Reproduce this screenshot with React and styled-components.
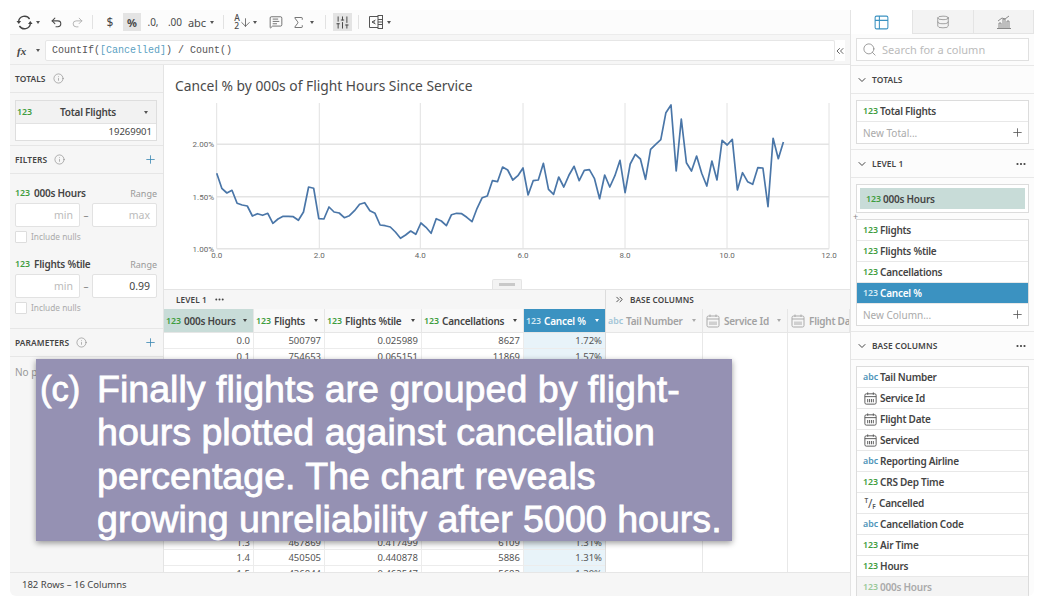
import styled, { createGlobalStyle } from "styled-components";
import { Undo2, Redo2, MessageSquareText, Sigma, SlidersVertical, Info, Plus, ChevronDown, ChevronsLeft, ChevronsRight, Search, Table2, Database, Ellipsis, ArrowDown } from "lucide-react";

const GlobalStyle = createGlobalStyle`
    html, body {
        margin: 0;
        background: #fff;
        font-family: "Noto Sans", "Open Sans", sans-serif;
        color: #444;
    }
    * { box-sizing: border-box; }
    svg { flex: none; }
`

const Page = styled.div`
    width: 1044px;
    height: 607px;
    padding: 10px;
    position: relative;
    overflow: hidden;
`
const Frame = styled.div`
    display: flex;
    width: 1024px;
    height: 586px;
    overflow: hidden;
    border-radius: 0 0 6px 6px;
`
const Main = styled.div`
    width: 840px;
    display: flex;
    flex-direction: column;
`
const Toolbar = styled.div`
    height: 24px;
    display: flex;
    align-items: center;
    padding-left: 5px;
    background: #fcfcfc;
    color: #555;
`
const Tool = styled.div`
    width: ${(p) => p.$w || 18}px;
    margin-left: ${(p) => p.$ml || 0}px;
    height: 18px;
    flex: none;
    display: flex;
    align-items: center;
    justify-content: center;
    font-size: ${(p) => p.$size || 11}px;
    font-weight: ${(p) => p.$bold ? 700 : 400};
    white-space: nowrap;
    color: ${(p) => p.$muted ? "#aaa" : "#4a4a4a"};
    background: ${(p) => p.$active ? "#e4e4e4" : "transparent"};
`
const Divider = styled.div`
    width: 1px;
    height: 14px;
    flex: none;
    background: #e2e2e2;
    margin: 0 ${(p) => p.$m || 7}px;
`
const Caret = styled.span`
    width: 0;
    height: 0;
    flex: none;
    border-left: 2.5px solid transparent;
    border-right: 2.5px solid transparent;
    border-top: 3px solid ${(p) => p.$color || "#555"};
`
const SortStack = styled.span`
    display: flex;
    flex-direction: column;
    font-size: 8.5px;
    line-height: 8px;
    font-weight: 500;
`
const FormulaBar = styled.div`
    height: 31px;
    display: flex;
    align-items: center;
    background: #f6f6f6;
    border-top: 1px solid #ececec;
    border-bottom: 1px solid #e8e8e8;
    padding: 2px 0 0 7px;
`
const Fx = styled.span`
    font-family: "Liberation Serif", serif;
    font-style: italic;
    font-weight: 700;
    font-size: 11px;
    width: 19px;
`
const FormulaInput = styled.div`
    margin-left: 5px;
    width: 790px;
    height: 21px;
    background: #fff;
    border: 1px solid #e6e6e6;
    border-radius: 2px;
    padding-left: 6px;
    font-family: "Liberation Mono", monospace;
    font-size: 10px;
    line-height: 19px;
    color: #555;
`
const FieldRef = styled.span`
    color: #5b9fc2;
`
const Collapse = styled.div`
    width: 10px;
    height: 21px;
    display: flex;
    align-items: center;
    justify-content: center;
    color: #666;
    background: #fff;
`
const Body = styled.div`
    flex: 1;
    min-height: 0;
    display: flex;
`
const LeftPanel = styled.div`
    width: 154px;
    flex: none;
    background: #f6f6f6;
    border-right: 1px solid #e4e4e4;
    overflow: hidden;
`
const SectionHead = styled.div`
    height: 28px;
    display: flex;
    align-items: center;
    gap: 7px;
    padding: 0 6px 0 5px;
    border-bottom: 1px solid #e6e6e6;
    font-size: 8.4px;
    font-weight: 600;
    letter-spacing: 0.1px;
    color: #444;
`
const PushRight = styled.span`
    margin-left: auto;
    display: flex;
    align-items: center;
    color: ${(p) => p.$color || "#444"};
`
const TotalsBody = styled.div`
    padding: 7px 6px 4px 5px;
    border-bottom: 1px solid #e6e6e6;
`
const TotalCard = styled.div`
    border: 1px solid #dedede;
    background: #fff;
`
const TotalTitle = styled.div`
    height: 23px;
    display: flex;
    align-items: center;
    background: #f2f2f2;
    border-bottom: 1px solid #e2e2e2;
    padding: 0 8px 0 1px;
    font-size: 10px;
    font-weight: 600;
    letter-spacing: -0.25px;
`
const TotalName = styled.span`
    flex: 1;
    text-align: center;
`
const TotalValue = styled.div`
    height: 16px;
    text-align: right;
    padding-right: 4px;
    font-size: 9.5px;
    line-height: 15px;
`
const Type = styled.span`
    flex: none;
    font-size: 8.8px;
    font-weight: 600;
    letter-spacing: 0;
    color: ${(p) => p.$light ? "#d5e9f4" : p.$kind === "abc" ? "#4c93b8" : "#3f9d3f"};
    opacity: ${(p) => p.$faded ? 0.5 : 1};
`
const BoolMark = styled.span`
    flex: none;
    width: 14px;
    height: 13px;
    display: flex;
    justify-content: center;
    font-size: 6.5px;
    font-weight: 600;
    color: #555;
`
const BoolPart = styled.span`
    align-self: ${(p) => p.$low ? "flex-end" : "flex-start"};
    line-height: 7px;
    font-size: ${(p) => p.$slash ? 12 : 6.5}px;
    font-weight: ${(p) => p.$slash ? 400 : 600};
    ${(p) => p.$slash && "align-self: center; line-height: 13px;"}
`
const FilterBody = styled.div`
    padding: 11px 6px 14px 5px;
    display: flex;
    flex-direction: column;
    gap: 13px;
    border-bottom: 1px solid #e6e6e6;
`
const Filter = styled.div`
    display: flex;
    flex-direction: column;
`
const FilterLabel = styled.div`
    height: 16px;
    margin-bottom: 2px;
    display: flex;
    align-items: center;
    gap: 4px;
    font-size: 10px;
    font-weight: 600;
    letter-spacing: -0.25px;
`
const RangeText = styled.span`
    margin-left: auto;
    font-size: 9px;
    font-weight: 400;
    letter-spacing: 0;
    color: #999;
`
const RangeRow = styled.div`
    display: flex;
    align-items: center;
    justify-content: space-between;
    color: #888;
    font-size: 10px;
`
const RangeInput = styled.div`
    width: 65px;
    height: 24px;
    background: #fff;
    border: 1px solid #e2e2e2;
    border-radius: 2px;
    padding-right: 6px;
    text-align: right;
    font-size: 10.5px;
    line-height: 22px;
    color: ${(p) => p.$filled ? "#444" : "#bbb"};
`
const NullsRow = styled.div`
    margin-top: 3px;
    height: 13px;
    display: flex;
    align-items: center;
    gap: 4px;
    font-size: 8.3px;
    color: #aaa;
`
const CheckBox = styled.span`
    width: 12px;
    height: 12px;
    border: 1px solid #ddd;
    background: #fff;
    border-radius: 1px;
`
const EmptyNote = styled.div`
    padding: 8px 5px;
    font-size: 10px;
    color: #999;
`
const Center = styled.div`
    flex: 1;
    min-width: 0;
    display: flex;
    flex-direction: column;
`
const ChartArea = styled.div`
    height: 225px;
    flex: none;
    display: flex;
    flex-direction: column;
    background: #fff;
    border-bottom: 1px solid #e4e4e4;
`
const ChartTitle = styled.div`
    height: 35px;
    padding: 11px 0 0 11px;
    font-size: 13.8px;
    line-height: 20px;
    color: #4a4a4a;
`
const ChartSvg = styled.svg`
    display: block;
    flex: none;
`
const Handle = styled.div`
    width: 30px;
    height: 10px;
    margin: auto auto 0;
    background: #f3f3f3;
    border: 1px solid #e4e4e4;
    border-bottom: 0;
    border-radius: 2px 2px 0 0;
    display: flex;
    align-items: center;
    justify-content: center;
    &::after {
        content: "";
        width: 16px;
        height: 3px;
        background: #c9c9c9;
    }
`
const TableArea = styled.div`
    flex: 1;
    min-height: 0;
    display: flex;
    overflow: hidden;
    background: #fff;
`
const TablePane = styled.div`
    width: ${(p) => p.$w}px;
    flex: none;
    overflow: hidden;
    border-right: ${(p) => p.$border ? "1px solid #dcdcdc" : "0"};
`
const PaneTitle = styled.div`
    height: 19px;
    display: flex;
    align-items: center;
    gap: ${(p) => p.$gap || 7}px;
    padding-left: ${(p) => p.$pad || 12}px;
    background: #f6f6f6;
    font-size: 8.2px;
    font-weight: 600;
    letter-spacing: 0.1px;
`
const Grid = styled.div`
    display: grid;
    grid-template-columns: ${(p) => p.$cols};
`
const HeadCell = styled.div`
    height: 24px;
    display: flex;
    align-items: center;
    gap: 3px;
    padding: 0 6px 0 2px;
    font-size: 10px;
    font-weight: 600;
    letter-spacing: -0.25px;
    white-space: nowrap;
    overflow: hidden;
    color: ${(p) => p.$tone === "blue" ? "#fff" : p.$tone === "muted" ? "#a2a2a2" : "#444"};
    background: ${(p) => p.$tone === "blue" ? "#3b92c1" : p.$tone === "teal" ? "#c8dcd8" : p.$tone === "muted" ? "#f6f6f6" : "#f9f9f9"};
    border-right: 1px solid #e6e6e6;
    border-bottom: 1px solid #e6e6e6;
`
const HeadName = styled.span`
    flex: 1 0 auto;
`
const Cell = styled.div`
    height: 15.5px;
    padding-right: 3px;
    text-align: right;
    font-size: 9.5px;
    line-height: 15px;
    color: #555;
    background: ${(p) => p.$sel ? "#e8f3f9" : "#fff"};
    border-right: 1px solid #ececec;
    border-bottom: 1px solid #ececec;
`
const EmptyColumns = styled.div`
    height: 260px;
    display: grid;
    grid-template-columns: 97px 85px 1fr;
`
const EmptyColumn = styled.div`
    border-right: 1px solid #e8e8e8;
`
const Footer = styled.div`
    height: 24px;
    flex: none;
    display: flex;
    align-items: center;
    padding-left: 12px;
    background: #f6f6f6;
    border-top: 1px solid #e6e6e6;
    font-size: 9.5px;
`
const RightPanel = styled.div`
    width: 184px;
    flex: none;
    background: #fcfcfc;
    border-left: 1px solid #e4e4e4;
    overflow: hidden;
`
const Tabs = styled.div`
    height: 24px;
    display: grid;
    grid-template-columns: 62px 61px 1fr;
`
const Tab = styled.div`
    display: flex;
    align-items: center;
    justify-content: center;
    color: ${(p) => p.$active ? "#3b92c1" : "#888"};
    background: ${(p) => p.$active ? "#fff" : "#f3f3f3"};
    border-right: 1px solid #e4e4e4;
    border-bottom: ${(p) => p.$active ? "0" : "1px solid #e4e4e4"};
`
const SearchBox = styled.div`
    margin: 4px 5px;
    height: 23px;
    display: flex;
    align-items: center;
    gap: 5px;
    padding-left: 5px;
    background: #fff;
    border: 1px solid #e0e0e0;
    font-size: 11px;
    color: #bbb;
`
const PanelHead = styled.div`
    height: 29px;
    display: flex;
    align-items: center;
    gap: 4px;
    padding: 0 7px 0 5px;
    border-top: 1px solid #e8e8e8;
    border-bottom: 1px solid #e8e8e8;
    font-size: 8.4px;
    font-weight: 600;
    letter-spacing: 0.1px;
`
const FieldBox = styled.div`
    margin: ${(p) => p.$top ?? 6}px 5px ${(p) => p.$bottom ?? 5}px 5px;
    background: #fff;
    border: 1px solid #dcdcdc;
    padding: ${(p) => p.$inset ? "3px" : "0"};
`
const Field = styled.div`
    height: 21px;
    display: flex;
    align-items: center;
    gap: 2px;
    padding: 0 5px 0 6px;
    font-size: 10px;
    font-weight: 600;
    letter-spacing: -0.25px;
    border-bottom: ${(p) => p.$inset ? "0" : "1px solid #e8e8e8"};
    color: ${(p) => p.$selected ? "#fff" : p.$faded ? "#aaa" : "#444"};
    background: ${(p) => p.$selected ? "#3b92c1" : p.$inset ? "#c8dcd8" : p.$faded ? "#f4f4f4" : "#fff"};
`
const NewField = styled.div`
    height: 21px;
    display: flex;
    align-items: center;
    justify-content: space-between;
    padding: 0 4px 0 6px;
    font-size: 10px;
    color: #aaa;
`
const DropMark = styled.div`
    height: 7px;
    margin-bottom: -1px;
    padding-left: 2px;
    font-size: 9px;
    line-height: 7px;
    color: #888;
`
const Callout = styled.div`
    position: absolute;
    left: 36px;
    top: 359px;
    width: 696px;
    height: 182px;
    padding: 9px 0 0 4px;
    display: grid;
    grid-template-columns: 57px 1fr;
    background: #9591b3;
    box-shadow: 0 2px 6px rgba(0, 0, 0, 0.4);
    font-family: "Liberation Sans", Arial, sans-serif;
    font-size: 37.6px;
    line-height: 43.3px;
    color: #fff;
    -webkit-text-stroke: 0.8px #fff;
`
const CalloutMark = styled.div`
    font-size: 34.5px;
`
const CalloutLine = styled.div`
    white-space: nowrap;
`

const points = [
    [0, 250], [1, 295], [2, 309], [3, 301], [4, 340], [5, 345], [6, 348], [7, 378], [8, 371], [9, 376],
    [10, 370], [11, 400], [12, 387], [13, 379], [14, 379], [15, 380], [16, 391], [17, 366], [18, 291], [19, 295],
    [20, 386], [21, 387], [22, 351], [23, 366], [24, 369], [25, 383], [26, 377], [27, 362], [28, 343], [29, 338],
    [30, 362], [31, 370], [32, 405], [33, 407], [34, 411], [35, 426], [36, 445], [37, 435], [38, 423], [39, 433],
    [40, 399], [41, 412], [42, 430], [43, 386], [44, 393], [45, 407], [46, 374], [47, 370], [48, 371], [49, 382],
    [50, 395], [51, 355], [52, 323], [53, 318], [54, 272], [55, 275], [56, 231], [57, 240], [58, 270], [59, 257],
    [60, 234], [61, 315], [62, 272], [63, 270], [64, 220], [65, 298], [66, 313], [67, 261], [68, 291], [69, 256],
    [70, 229], [71, 272], [72, 241], [73, 239], [74, 266], [75, 326], [76, 255], [77, 291], [78, 257], [79, 211],
    [80, 308], [81, 222], [82, 193], [83, 207], [84, 268], [85, 178], [86, 163], [87, 149], [88, 68], [89, 45],
    [90, 243], [91, 87], [92, 218], [93, 243], [94, 198], [95, 250], [96, 288], [97, 213], [98, 270], [99, 151],
    [100, 165], [101, 148], [102, 300], [103, 248], [104, 275], [105, 283], [106, 233], [107, 234], [108, 350], [109, 145],
    [110, 206], [111, 156],
]
const linePath = points.map(([i, z]) => `${(52.7 + i * 5.105).toFixed(1)},${(z / 3 - 10).toFixed(1)}`).join(" ")

const xTicks = [["0.0", 52.7], ["2.0", 155.3], ["4.0", 256.3], ["6.0", 359], ["8.0", 461], ["10.0", 563], ["12.0", 665]]
const yTicks = [["2.00%", 44.3], ["1.50%", 96.7], ["1.00%", 148.7]]

// the rows from 0.2 to 1.2 sit behind the callout, so they stay blank
const blankRow = () => ["", "", "", "", ""]
const tableRows = [
    ["0.0", "500797", "0.025989", "8627", "1.72%"],
    ["0.1", "754653", "0.065151", "11869", "1.57%"],
    ...Array.from({ length: 11 }, blankRow),
    ["1.3", "467869", "0.417499", "6109", "1.31%"],
    ["1.4", "450505", "0.440878", "5886", "1.31%"],
    ["1.5", "436844", "0.462547", "5682", "1.30%"],
]

function CalendarIcon({ size = 16, color = "#555" }) {
    return (
        <svg width={size} height={size} viewBox="0 0 16 16" fill="none" stroke={color} strokeWidth="1">
            <rect x="2" y="3" width="12" height="11" rx="1.5" />
            <path d="M2 6h12M5 1.5v2.5M11 1.5v2.5M5 8.5v3.5M7 8.5v3.5M9 8.5v3.5M11 8.5v3.5" />
        </svg>
    )
}

function RefreshIcon() {
    return (
        <svg width="17" height="17" viewBox="0 0 17 17" fill="none" stroke="#444" strokeWidth="1.4">
            <path d="M2.6 7.5a6 6 0 0 1 11-2.5" />
            <path d="M14.4 9.5a6 6 0 0 1-11 2.5" />
            <path d="M0.5 7h4.6l-2.3 3z M12 10h4.6l-2.3-3z" fill="#444" stroke="none" />
        </svg>
    )
}

function PanelIcon() {
    return (
        <svg width="16" height="14" viewBox="0 0 16 14" fill="none" stroke="#555" strokeWidth="1">
            <path d="M10 1.5H1.5v11H10" />
            <rect x="10" y="0.5" width="4.5" height="13" />
            <path d="M7.5 5L4 7l3.5 2M4 7h3M10 4.5h4.5M10 7h4.5M10 9.5h4.5" />
        </svg>
    )
}

function ChartTabIcon() {
    return (
        <svg width="16" height="16" viewBox="0 0 16 16" fill="none" stroke="#888" strokeWidth="1">
            <path d="M1 14.5h14M3 14V9h2v5M7 14V5h2v9M11 14V7h2v7M2 7l4-3 3 1 4-3" />
        </svg>
    )
}

function FieldRow({ kind = "123", name, selected, faded, inset }) {
    return (
        <Field $selected={selected} $faded={faded} $inset={inset}>
            {kind === "date" && <CalendarIcon size={15} />}
            {kind === "bool" && (
                <BoolMark>
                    <BoolPart>T</BoolPart>
                    <BoolPart $slash>/</BoolPart>
                    <BoolPart $low>F</BoolPart>
                </BoolMark>
            )}
            {kind !== "date" && kind !== "bool" && (
                <Type $kind={kind} $faded={faded} $light={selected}>{kind}</Type>
            )}
            {name}
        </Field>
    )
}

function ColumnHead({ kind = "123", name, tone }) {
    return (
        <HeadCell $tone={tone}>
            {kind === "date" ? <CalendarIcon color="#aaa" /> : (
                <Type $kind={kind} $faded={tone === "muted"} $light={tone === "blue"}>{kind}</Type>
            )}
            <HeadName>{name}</HeadName>
            <Caret $color={tone === "blue" ? "#fff" : tone === "muted" ? "#aaa" : "#444"} />
        </HeadCell>
    )
}

function RangeFilter({ name, max, filled }) {
    return (
        <Filter>
            <FilterLabel>
                <Type>123</Type>
                {name}
                <RangeText>Range</RangeText>
            </FilterLabel>
            <RangeRow>
                <RangeInput>min</RangeInput>
                –
                <RangeInput $filled={filled}>{max}</RangeInput>
            </RangeRow>
            <NullsRow>
                <CheckBox />
                Include nulls
            </NullsRow>
        </Filter>
    )
}

export default function App() {
    return (
        <Page>
            <GlobalStyle />
            <Frame>
                <Main>
                    <Toolbar>
                        <Tool><RefreshIcon /></Tool>
                        <Tool $w={10}><Caret /></Tool>
                        <Tool $w={26}><Undo2 size={13} strokeWidth={1.9} /></Tool>
                        <Tool $w={16} $muted><Redo2 size={13} strokeWidth={1.6} /></Tool>
                        <Divider />
                        <Tool $w={20} $size={12}>$</Tool>
                        <Tool $ml={3} $active $bold>%</Tool>
                        <Tool $w={24} $size={10}>.0,</Tool>
                        <Tool $w={20} $size={10}>.00</Tool>
                        <Tool $w={24}>abc</Tool>
                        <Tool $w={6}><Caret /></Tool>
                        <Divider $m={8} />
                        <Tool $w={10}>
                            <SortStack><span>A</span><span>2</span></SortStack>
                        </Tool>
                        <Tool $w={6}><ArrowDown size={13} strokeWidth={1.4} /></Tool>
                        <Tool $w={14}><Caret /></Tool>
                        <Tool $w={28}><MessageSquareText size={14} strokeWidth={1.3} /></Tool>
                        <Tool $w={16}><Sigma size={15} strokeWidth={1.2} /></Tool>
                        <Tool $w={12}><Caret /></Tool>
                        <Divider $m={7} />
                        <Tool $w={19} $active><SlidersVertical size={15} strokeWidth={1.6} /></Tool>
                        <Divider $m={6} />
                        <Tool $w={22}><PanelIcon /></Tool>
                        <Tool $w={4}><Caret /></Tool>
                    </Toolbar>
                    <FormulaBar>
                        <Fx>fx</Fx>
                        <Caret />
                        <FormulaInput>
                            CountIf(<FieldRef>[Cancelled]</FieldRef>) / Count()
                        </FormulaInput>
                        <Collapse><ChevronsLeft size={12} /></Collapse>
                    </FormulaBar>
                    <Body>
                        <LeftPanel>
                            <SectionHead>TOTALS <Info size={11} strokeWidth={1.2} color="#777" /></SectionHead>
                            <TotalsBody>
                                <TotalCard>
                                    <TotalTitle>
                                        <Type>123</Type>
                                        <TotalName>Total Flights</TotalName>
                                        <Caret />
                                    </TotalTitle>
                                    <TotalValue>19269901</TotalValue>
                                </TotalCard>
                            </TotalsBody>
                            <SectionHead>
                                FILTERS <Info size={11} strokeWidth={1.2} color="#777" />
                                <PushRight $color="#3b87b3"><Plus size={13} strokeWidth={1.5} /></PushRight>
                            </SectionHead>
                            <FilterBody>
                                <RangeFilter name="000s Hours" max="max" />
                                <RangeFilter name="Flights %tile" max="0.99" filled />
                            </FilterBody>
                            <SectionHead>
                                PARAMETERS <Info size={11} strokeWidth={1.2} color="#777" />
                                <PushRight $color="#3b87b3"><Plus size={13} strokeWidth={1.5} /></PushRight>
                            </SectionHead>
                            <EmptyNote>No p</EmptyNote>
                        </LeftPanel>
                        <Center>
                            <ChartArea>
                                <ChartTitle>Cancel % by 000s of Flight Hours Since Service</ChartTitle>
                                <ChartSvg width="686" height="165" viewBox="0 0 686 165">
                                    {yTicks.map(([label, y]) => (
                                        <g key={label}>
                                            <line x1="52.7" x2="665" y1={y} y2={y} stroke="#e4e4e4" strokeWidth="1.4" />
                                            <text x="50" y={y + 3} textAnchor="end" fontSize="8" fill="#666" fontFamily="Roboto, sans-serif">{label}</text>
                                        </g>
                                    ))}
                                    {xTicks.map(([label, x]) => (
                                        <g key={label}>
                                            <line x1={x} x2={x} y1="3" y2="148.7" stroke="#e2e2e2" strokeWidth="1" />
                                            <text x={x} y="158" textAnchor="middle" fontSize="8" fill="#666" fontFamily="Roboto, sans-serif">{label}</text>
                                        </g>
                                    ))}
                                    <polyline points={linePath} fill="none" stroke="#4a76a8" strokeWidth="1.7" strokeLinejoin="round" />
                                </ChartSvg>
                                <Handle />
                            </ChartArea>
                            <TableArea>
                                <TablePane $w={442} $border>
                                    <PaneTitle>LEVEL 1 <Ellipsis size={11} strokeWidth={2.4} /></PaneTitle>
                                    <Grid $cols="90px 71px 97px 102px 82px">
                                        <ColumnHead name="000s Hours" tone="teal" />
                                        <ColumnHead name="Flights" />
                                        <ColumnHead name="Flights %tile" />
                                        <ColumnHead name="Cancellations" />
                                        <ColumnHead name="Cancel %" tone="blue" />
                                        {tableRows.map((row, r) => row.map((value, i) => (
                                            <Cell key={`${r}-${i}`} $sel={i === 4}>{value}</Cell>
                                        )))}
                                    </Grid>
                                </TablePane>
                                <TablePane $w={244}>
                                    <PaneTitle $pad={8} $gap={5}><ChevronsRight size={11} /> BASE COLUMNS</PaneTitle>
                                    <Grid $cols="97px 85px 1fr">
                                        <ColumnHead kind="abc" name="Tail Number" tone="muted" />
                                        <ColumnHead kind="date" name="Service Id" tone="muted" />
                                        <ColumnHead kind="date" name="Flight Date" tone="muted" />
                                    </Grid>
                                    <EmptyColumns>
                                        <EmptyColumn />
                                        <EmptyColumn />
                                    </EmptyColumns>
                                </TablePane>
                            </TableArea>
                        </Center>
                    </Body>
                    <Footer>182 Rows – 16 Columns</Footer>
                </Main>
                <RightPanel>
                    <Tabs>
                        <Tab $active><Table2 size={17} strokeWidth={1.5} /></Tab>
                        <Tab><Database size={14} strokeWidth={1.3} /></Tab>
                        <Tab><ChartTabIcon /></Tab>
                    </Tabs>
                    <SearchBox><Search size={15} strokeWidth={1.3} color="#888" />Search for a column</SearchBox>
                    <PanelHead><ChevronDown size={12} />TOTALS</PanelHead>
                    <FieldBox>
                        <FieldRow name="Total Flights" />
                        <NewField>New Total...<Plus size={13} strokeWidth={1.5} color="#555" /></NewField>
                    </FieldBox>
                    <PanelHead><ChevronDown size={12} />LEVEL 1<PushRight><Ellipsis size={12} strokeWidth={2.4} /></PushRight></PanelHead>
                    <FieldBox $inset $bottom={0}>
                        <FieldRow name="000s Hours" inset />
                    </FieldBox>
                    <DropMark>+</DropMark>
                    <FieldBox $top={0}>
                        <FieldRow name="Flights" />
                        <FieldRow name="Flights %tile" />
                        <FieldRow name="Cancellations" />
                        <FieldRow name="Cancel %" selected />
                        <NewField>New Column...<Plus size={13} strokeWidth={1.5} color="#555" /></NewField>
                    </FieldBox>
                    <PanelHead><ChevronDown size={12} />BASE COLUMNS<PushRight><Ellipsis size={12} strokeWidth={2.4} /></PushRight></PanelHead>
                    <FieldBox>
                        <FieldRow kind="abc" name="Tail Number" />
                        <FieldRow kind="date" name="Service Id" />
                        <FieldRow kind="date" name="Flight Date" />
                        <FieldRow kind="date" name="Serviced" />
                        <FieldRow kind="abc" name="Reporting Airline" />
                        <FieldRow name="CRS Dep Time" />
                        <FieldRow kind="bool" name="Cancelled" />
                        <FieldRow kind="abc" name="Cancellation Code" />
                        <FieldRow name="Air Time" />
                        <FieldRow name="Hours" />
                        <FieldRow name="000s Hours" faded />
                    </FieldBox>
                </RightPanel>
            </Frame>
            <Callout>
                <CalloutMark>(c)</CalloutMark>
                <div>
                    <CalloutLine>Finally flights are grouped by flight-</CalloutLine>
                    <CalloutLine>hours plotted against cancellation</CalloutLine>
                    <CalloutLine>percentage. The chart reveals</CalloutLine>
                    <CalloutLine>growing unreliability after 5000 hours.</CalloutLine>
                </div>
            </Callout>
        </Page>
    )
}
